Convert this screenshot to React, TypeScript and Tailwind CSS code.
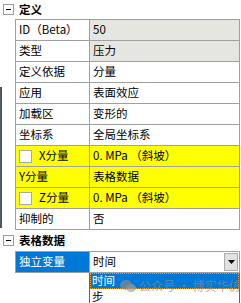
import React from "react";

type Row = { name: string; value: string; kind?: "ro" | "yellow"; check?: boolean };

const rows: Row[] = [
  { name: "ID（Beta）", value: "50", kind: "ro" },
  { name: "类型", value: "压力", kind: "ro" },
  { name: "定义依据", value: "分量" },
  { name: "应用", value: "表面效应" },
  { name: "加载区", value: "变形的" },
  { name: "坐标系", value: "全局坐标系" },
  { name: "X分量", value: "0. MPa （斜坡）", kind: "yellow", check: true },
  { name: "Y分量", value: "表格数据", kind: "yellow" },
  { name: "Z分量", value: "0. MPa （斜坡）", kind: "yellow", check: true },
  { name: "抑制的", value: "否" },
];

function Minus() {
  return (
    <div className="w-[11px] h-[11px] border border-[#9a9a9a] bg-white flex items-center justify-center">
      <div className="w-[5px] h-px bg-black" />
    </div>
  );
}

function Header({ title, h }: { title: string; h: string }) {
  return (
    <div className={`flex items-center ${h}`}>
      <div className="w-[15px] shrink-0 flex justify-center pl-[1px]">
        <Minus />
      </div>
      <div className="pl-[4px] font-bold text-black">{title}</div>
    </div>
  );
}

export default function App() {
  return (
    <div className="relative w-[241px] h-[303px] overflow-hidden bg-white text-[11.5px] leading-none text-black font-['Noto_Sans_CJK_SC','Noto_Sans',sans-serif]">
      <Header title="定义" h="h-[19px]" />
      {rows.map((r, i) => {
        const bg =
          r.kind === "yellow" ? "bg-[#ffff00]" : "bg-white";
        const vbg =
          r.kind === "yellow" ? "bg-[#ffff00]" : r.kind === "ro" ? "bg-[#e6e6e1]" : "bg-white";
        const last = i === rows.length - 1;
        return (
          <div key={i} className={`flex ${last ? "h-[22px]" : "h-[21px]"}`}>
            <div className="w-[15px] shrink-0" />
            <div
              className={`w-[74px] shrink-0 border-l border-t border-[#a0a0a0] ${last ? "border-b" : ""} ${bg} flex items-center ${r.check ? "pl-[3px]" : "pl-[3px]"}`}
            >
              {r.check && (
                <div className="w-[13px] h-[13px] border border-[#a8a8a8] bg-white mr-[7px] shrink-0" />
              )}
              <span>{r.name}</span>
            </div>
            <div
              className={`w-[151px] shrink-0 border-l border-t border-r border-[#a0a0a0] ${last ? "border-b" : ""} ${vbg} flex items-center pl-[3px]`}
            >
              {r.value}
            </div>
          </div>
        );
      })}
      <Header title="表格数据" h="h-[21px]" />
      <div className="flex h-[22px]">
        <div className="w-[15px] shrink-0" />
        <div className="w-[74px] shrink-0 border-l border-t border-b border-[#a0a0a0] bg-[#0078d7] text-white flex items-center pl-[3px]">
          独立变量
        </div>
        <div className="w-[151px] shrink-0 border-l border-t border-r border-b border-[#a0a0a0] bg-white flex items-center pl-[3px] pr-[1px]">
          <span className="flex-1">时间</span>
          <div className="w-[14px] h-[18px] bg-[#e1e1e1] border border-[#adadad] flex items-center justify-center">
            <svg width="7" height="4" viewBox="0 0 7 4">
              <path d="M0 0 H7 L3.5 4 Z" fill="#000" />
            </svg>
          </div>
        </div>
      </div>
      <div className="flex">
        <div className="w-[89px] shrink-0" />
        <div className="w-[151px] shrink-0 border-l border-r border-[#646464] bg-white">
          <div className="h-[16px] bg-[#0078d7] text-white border border-dotted border-[#f0a030] flex items-center pl-[1px]">
            时间
          </div>
          <div className="h-[16px] flex items-center pl-[2px]">步</div>
        </div>
      </div>
      <div className="absolute left-0 top-[87px] w-[2px] h-[141px] bg-[#4d5866]" />
      <div className="absolute left-[120px] top-[279px] flex items-center gap-[3px] opacity-70 text-[12px] text-[#8c8c8c]">
        <svg width="16" height="14" viewBox="0 0 16 14">
          <ellipse cx="6" cy="6" rx="6" ry="5" fill="#8c8c8c" />
          <ellipse cx="11" cy="9" rx="5" ry="4" fill="#a0a0a0" />
        </svg>
        <span>公众号 · 博实华仿</span>
      </div>
    </div>
  );
}
